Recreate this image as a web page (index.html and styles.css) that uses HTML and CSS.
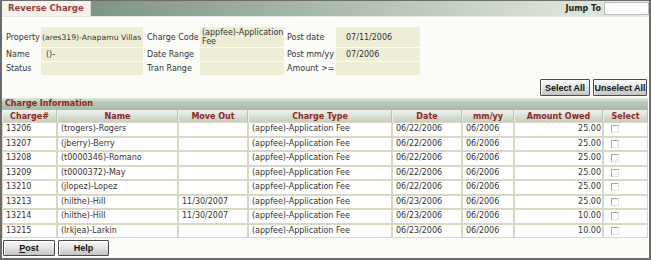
FILE: index.html
```html
<!DOCTYPE html>
<html>
<head>
<meta charset="utf-8">
<link rel="stylesheet" href="styles.css">
</head>
<body>
<div class="frame">
  <div class="topbar">
    <div class="tab">Reverse Charge</div>
    <div class="bar">
      <label class="jump-label" for="jump">Jump To</label>
      <input class="jump-input" id="jump" type="text">
    </div>
  </div>
  <div class="content">
    <div class="filters">
      <div class="lbl">Property</div>
      <div class="fld fld-prop">(ares319)-Anapamu Villas</div>
      <div class="lbl lbl-2">Charge Code</div>
      <div class="fld fld-code">(appfee)-Application Fee</div>
      <div class="lbl lbl-3">Post date</div>
      <div class="fld fld-date">07/11/2006</div>

      <div class="lbl">Name</div>
      <div class="fld fld-name">()-</div>
      <div class="lbl lbl-2">Date Range</div>
      <div class="fld"></div>
      <div class="lbl lbl-3">Post mm/yy</div>
      <div class="fld fld-date">07/2006</div>

      <div class="lbl">Status</div>
      <div class="fld"></div>
      <div class="lbl lbl-2">Tran Range</div>
      <div class="fld"></div>
      <div class="lbl lbl-3">Amount &gt;=</div>
      <div class="fld"></div>
    </div>

    <div class="actions">
      <button class="btn btn-select">Select All</button>
      <button class="btn btn-unselect">Unselect All</button>
    </div>

    <div class="section-title">Charge Information</div>
    <table class="grid">
      <colgroup>
        <col class="c-charge"><col class="c-name"><col class="c-move"><col class="c-type">
        <col class="c-date"><col class="c-mm"><col class="c-amt"><col class="c-sel">
      </colgroup>
      <thead>
        <tr><th>Charge#</th><th>Name</th><th>Move Out</th><th>Charge Type</th><th>Date</th><th>mm/yy</th><th>Amount Owed</th><th>Select</th></tr>
      </thead>
      <tbody>
        <tr><td>13206</td><td>(trogers)-Rogers</td><td></td><td>(appfee)-Application Fee</td><td>06/22/2006</td><td>06/2006</td><td class="amt">25.00</td><td class="sel"><input type="checkbox" class="chk"></td></tr>
        <tr><td>13207</td><td>(jberry)-Berry</td><td></td><td>(appfee)-Application Fee</td><td>06/22/2006</td><td>06/2006</td><td class="amt">25.00</td><td class="sel"><input type="checkbox" class="chk"></td></tr>
        <tr><td>13208</td><td>(t0000346)-Romano</td><td></td><td>(appfee)-Application Fee</td><td>06/22/2006</td><td>06/2006</td><td class="amt">25.00</td><td class="sel"><input type="checkbox" class="chk"></td></tr>
        <tr><td>13209</td><td>(t0000372)-May</td><td></td><td>(appfee)-Application Fee</td><td>06/22/2006</td><td>06/2006</td><td class="amt">25.00</td><td class="sel"><input type="checkbox" class="chk"></td></tr>
        <tr><td>13210</td><td>(jlopez)-Lopez</td><td></td><td>(appfee)-Application Fee</td><td>06/22/2006</td><td>06/2006</td><td class="amt">25.00</td><td class="sel"><input type="checkbox" class="chk"></td></tr>
        <tr><td>13213</td><td>(hilthe)-Hill</td><td>11/30/2007</td><td>(appfee)-Application Fee</td><td>06/23/2006</td><td>06/2006</td><td class="amt">25.00</td><td class="sel"><input type="checkbox" class="chk"></td></tr>
        <tr><td>13214</td><td>(hilthe)-Hill</td><td>11/30/2007</td><td>(appfee)-Application Fee</td><td>06/23/2006</td><td>06/2006</td><td class="amt">10.00</td><td class="sel"><input type="checkbox" class="chk"></td></tr>
        <tr><td>13215</td><td>(lrkjea)-Larkin</td><td></td><td>(appfee)-Application Fee</td><td>06/23/2006</td><td>06/2006</td><td class="amt">10.00</td><td class="sel"><input type="checkbox" class="chk"></td></tr>
      </tbody>
    </table>

    <div class="footer">
      <button class="btn btn-post"><u>P</u>ost</button>
      <button class="btn btn-help">Help</button>
    </div>
  </div>
</div>
</body>
</html>
```

FILE: styles.css
```css
html, body {
  margin: 0;
  padding: 0;
  background: #ffffff;
}

.frame {
  box-sizing: border-box;
  width: 651px;
  height: 260px;
  border: 2px solid #6c6c6c;
  border-top: 1px solid #6c6c6c;
  background: #fbfbf8;
  font-family: "DejaVu Sans", Verdana, sans-serif;
  font-size: 8px;
  color: #333333;
  overflow: hidden;
}

.topbar {
  display: flex;
  height: 15px;
  border-bottom: 1px solid #e4e6e0;
}

.tab {
  width: 89px;
  background: #f3f3ec;
  border-right: 1px solid #d6dbd2;
  color: #94403f;
  font-weight: bold;
  font-size: 8.5px;
  line-height: 15px;
  padding-left: 6px;
  box-sizing: border-box;
}

.bar {
  flex: 1;
  display: flex;
  align-items: center;
  justify-content: flex-end;
  background: linear-gradient(to right, #7f9484 0%, #a8b8a9 40%, #d6ded2 80%, #e8ece4 100%);
}

.jump-label {
  font-weight: bold;
  color: #222222;
  margin-right: 3px;
}

.jump-input {
  box-sizing: border-box;
  width: 45px;
  height: 13px;
  border: 1px solid #b8bcb4;
  background: #ffffff;
  padding: 0;
  margin: 0;
}

.filters {
  display: grid;
  grid-template-columns: 35px 102px 57px 84px 52px 84px;
  grid-template-rows: 20px 13px 13px;
  row-gap: 1px;
  padding: 10px 0 0 4px;
}

.lbl {
  display: flex;
  align-items: center;
  white-space: nowrap;
}

.lbl-2 {
  padding-left: 4px;
}

.lbl-3 {
  padding-left: 3px;
}

.fld {
  background: #eeeed7;
  display: flex;
  align-items: center;
  padding-left: 2px;
  white-space: nowrap;
  line-height: 9px;
}

.fld-prop {
  font-size: 7.7px;
  padding-left: 1px;
}

.fld-code {
  white-space: normal;
  padding-left: 2px;
}

.fld-name {
  padding-left: 5px;
}

.fld-date {
  padding-left: 10px;
}

.actions {
  display: flex;
  justify-content: flex-end;
  gap: 3px;
  margin-top: 4px;
  padding-right: 2px;
}

.btn {
  box-sizing: border-box;
  height: 17px;
  margin: 0;
  padding: 0;
  border: 1px solid #4a4a4a;
  border-radius: 1px;
  background: linear-gradient(to bottom, #fafafa 0%, #e2e2e2 50%, #c4c4c4 100%);
  box-shadow: inset 1px 1px 0 #ffffff;
  font-family: "Liberation Sans", Arial, sans-serif;
  font-weight: bold;
  font-size: 9px;
  color: #111111;
}

.btn-select {
  width: 50px;
}

.btn-unselect {
  width: 54px;
}

.section-title {
  margin: 2px 1px 0 0;
  height: 12px;
  line-height: 12px;
  padding-left: 3px;
  font-weight: bold;
  color: #8e2626;
  background: linear-gradient(to bottom, #e2e9df 0%, #b9c8b8 35%, #a9baa8 100%);
}

.grid {
  table-layout: fixed;
  width: 646px;
  border-collapse: separate;
  border-spacing: 0;
}

.c-charge { width: 55px; }
.c-name { width: 121px; }
.c-move { width: 70px; }
.c-type { width: 144px; }
.c-date { width: 70px; }
.c-mm { width: 52px; }
.c-amt { width: 89px; }
.c-sel { width: 45px; }

.grid th {
  box-sizing: border-box;
  height: 12px;
  padding: 0;
  font-weight: bold;
  color: #8e2626;
  text-align: center;
  background: linear-gradient(to bottom, #f0f3ed 0%, #d5ddd2 60%, #c3cfc1 100%);
  border-left: 1px solid #eef0ea;
  border-right: 1px solid #b9c3b6;
  line-height: 11px;
}

.grid td {
  box-sizing: border-box;
  height: 14.5px;
  padding: 0 3px;
  border: 1px solid #dad6c4;
  background: #ffffff;
  white-space: nowrap;
  overflow: hidden;
  line-height: 12px;
}

.grid td.amt {
  text-align: right;
  padding-right: 1px;
}

.grid td.sel {
  padding-left: 7px;
}

.chk {
  appearance: none;
  -webkit-appearance: none;
  display: block;
  box-sizing: border-box;
  width: 8px;
  height: 8px;
  margin: 0;
  border: 1px solid #a8a8a8;
  border-right-color: #e0e0e0;
  border-bottom-color: #e0e0e0;
  background: #ffffff;
}

.footer {
  display: flex;
  gap: 3px;
  margin-top: 2px;
  padding-left: 1px;
}

.btn-post {
  width: 52px;
  height: 16px;
}

.btn-help {
  width: 51px;
  height: 16px;
}
```
